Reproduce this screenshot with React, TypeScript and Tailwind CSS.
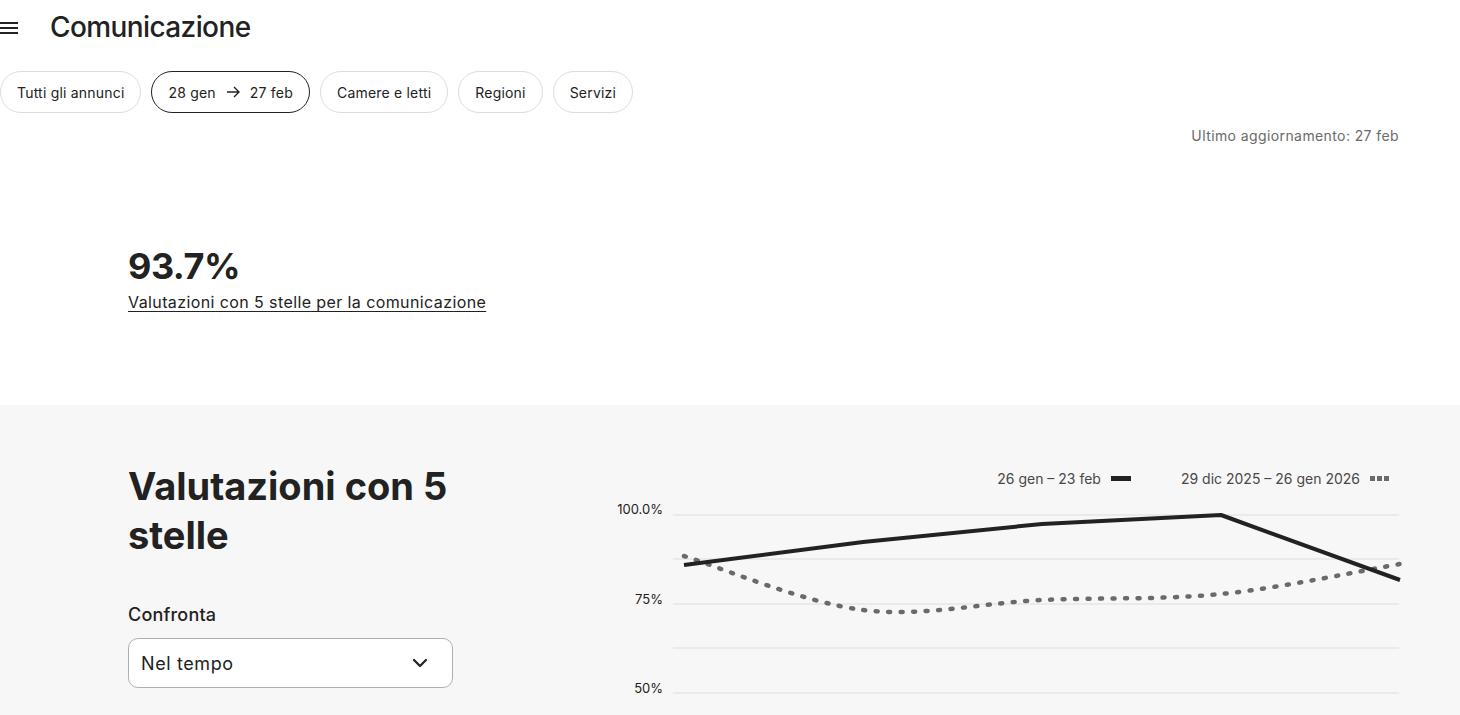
import React from 'react';

const filters = ['Tutti gli annunci', 'date', 'Camere e letti', 'Regioni', 'Servizi'];

// chart points in svg coords (x, y)
const xs = [85, 264, 443, 622, 801];
const current = [70, 47, 29, 20, 85];
const previous = [61, 115, 105, 99, 69];

function linePath(ys: number[]) {
  return xs.map((x, i) => `${i === 0 ? 'M' : 'L'}${x},${ys[i]}`).join(' ');
}

function smoothPath(ys: number[]) {
  const pts = xs.map((x, i) => [x, ys[i]]);
  let d = `M${pts[0][0]},${pts[0][1]}`;
  for (let i = 0; i < pts.length - 1; i++) {
    const p0 = pts[i - 1] || pts[i];
    const p1 = pts[i];
    const p2 = pts[i + 1];
    const p3 = pts[i + 2] || p2;
    const c1 = [p1[0] + (p2[0] - p0[0]) / 6, p1[1] + (p2[1] - p0[1]) / 6];
    const c2 = [p2[0] - (p3[0] - p1[0]) / 6, p2[1] - (p3[1] - p1[1]) / 6];
    d += ` C${c1[0]},${c1[1]} ${c2[0]},${c2[1]} ${p2[0]},${p2[1]}`;
  }
  return d;
}

function Chart() {
  const grid = [20, 64, 109, 153, 198];
  return (
    <svg width="800" height="220" viewBox="0 0 800 220" className="block overflow-visible">
      {grid.map((y) => (
        <line key={y} x1="74" x2="800" y1={y} y2={y} stroke="#dddddd" strokeWidth="1" />
      ))}
      <text x="64" y="19" textAnchor="end" fontSize="13" fill="#222222" fontFamily="Inter, sans-serif">100.0%</text>
      <text x="64" y="109" textAnchor="end" fontSize="13" fill="#222222" fontFamily="Inter, sans-serif">75%</text>
      <text x="64" y="198" textAnchor="end" fontSize="13" fill="#222222" fontFamily="Inter, sans-serif">50%</text>
      <path d={smoothPath(previous)} fill="none" stroke="#6a6a6a" strokeWidth="4.5" strokeLinecap="round" strokeDasharray="2 10.5" />
      <path d={linePath(current)} fill="none" stroke="#222222" strokeWidth="4" strokeLinejoin="round" />
    </svg>
  );
}

export default function App() {
  return (
    <div className="min-h-screen bg-white text-[#222222] font-['Inter',sans-serif]">
      <header className="h-[54px] flex items-center">
        <svg width="19" height="14" viewBox="0 0 19 14" className="mt-[1px]">
          <rect x="0" y="1" width="18" height="2" fill="#222" />
          <rect x="0" y="6" width="18" height="2" fill="#222" />
          <rect x="0" y="11" width="18" height="2" fill="#222" />
        </svg>
        <h1 className="ml-[31px] text-[28px] font-medium tracking-[-0.6px]">Comunicazione</h1>
      </header>

      <div className="mt-[17px] flex gap-[10px]">
        {filters.map((f) =>
          f === 'date' ? (
            <button key={f} className="h-[42px] px-[16px] rounded-full border-[1.5px] border-[#222222] text-[14px] tracking-[0.2px] flex items-center gap-[10px]">
              <span>28 gen</span>
              <svg width="14" height="12" viewBox="0 0 14 12" fill="none" stroke="#222" strokeWidth="1.4">
                <path d="M1 6h12M8 1l5 5-5 5" />
              </svg>
              <span>27 feb</span>
            </button>
          ) : (
            <button key={f} className="h-[42px] px-[16px] rounded-full border border-[#dddddd] text-[14px] tracking-[0.2px]">
              {f}
            </button>
          )
        )}
      </div>

      <div className="pr-[61px] mt-[13px] flex justify-end">
        <span className="text-[14px] leading-[20px] tracking-[0.4px] text-[#6a6a6a]">Ultimo aggiornamento: 27 feb</span>
      </div>

      <section className="pl-[128px] pt-[100px] h-[259px]">
        <div className="text-[36px] leading-[40px] font-bold tracking-[-0.5px]">93.7%</div>
        <a className="mt-[6px] inline-block text-[16px] leading-[20px] tracking-[0.4px] underline underline-offset-[3px]">
          Valutazioni con 5 stelle per la comunicazione
        </a>
      </section>

      <section className="bg-[#f7f7f7] pl-[128px] pr-[61px] pt-[57px] pb-[40px] flex">
        <div className="w-[325px] shrink-0">
          <h2 className="text-[38px] leading-[49px] font-bold whitespace-nowrap">
            Valutazioni con 5<br />stelle
          </h2>
          <div className="mt-[43px] text-[18px] leading-[24px] font-medium tracking-[0.2px]">Confronta</div>
          <div className="mt-[11px] h-[50px] rounded-[10px] border border-[#b0b0b0] bg-white flex items-center justify-between pl-[12px] pr-[24px]">
            <span className="text-[18px] tracking-[0.6px]">Nel tempo</span>
            <svg width="16" height="10" viewBox="0 0 16 10" fill="none" stroke="#222" strokeWidth="2.2" strokeLinecap="round" strokeLinejoin="round">
              <path d="M2 2l6 6 6-6" />
            </svg>
          </div>
        </div>
        <div className="ml-[146px] flex-1 min-w-0">
          <div className="mt-[6px] pr-[10px] h-[20px] flex justify-end items-center text-[14px] text-[#484848]">
            <span>26 gen – 23 feb</span>
            <span className="ml-[10px] w-[20px] h-[5px] bg-[#222222]" />
            <span className="ml-[50px]">29 dic 2025 – 26 gen 2026</span>
            <span className="ml-[10px] flex gap-[2px]">
              <span className="w-[5px] h-[5px] bg-[#6a6a6a]" />
              <span className="w-[5px] h-[5px] bg-[#6a6a6a]" />
              <span className="w-[5px] h-[5px] bg-[#6a6a6a]" />
            </span>
          </div>
          <div className="mt-[7px]">
            <Chart />
          </div>
        </div>
      </section>
    </div>
  );
}
